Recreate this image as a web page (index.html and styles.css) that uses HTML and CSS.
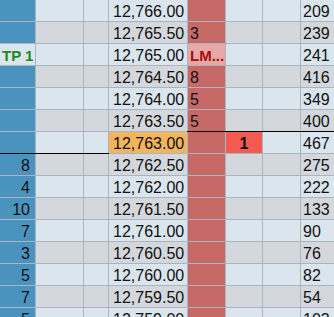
FILE: index.html
```html
<!DOCTYPE html>
<html>
<head>
<meta charset="utf-8">
<link rel="stylesheet" href="styles.css">
</head>
<body>
<div class="dom">
  <div class="c bid"></div><div class="c"></div><div class="c"></div><div class="c price">12,766.00</div><div class="c ask"></div><div class="c"></div><div class="c"></div><div class="c vol">209</div>
  <div class="c bid"></div><div class="c alt"></div><div class="c alt"></div><div class="c price alt">12,765.50</div><div class="c ask">3</div><div class="c alt"></div><div class="c alt"></div><div class="c vol alt">239</div>
  <div class="c tp">TP 1</div><div class="c"></div><div class="c"></div><div class="c price">12,765.00</div><div class="c ask order">LM...</div><div class="c"></div><div class="c"></div><div class="c vol">241</div>
  <div class="c bid"></div><div class="c alt"></div><div class="c alt"></div><div class="c price alt">12,764.50</div><div class="c ask">8</div><div class="c alt"></div><div class="c alt"></div><div class="c vol alt">416</div>
  <div class="c bid"></div><div class="c"></div><div class="c"></div><div class="c price">12,764.00</div><div class="c ask">5</div><div class="c"></div><div class="c"></div><div class="c vol">349</div>
  <div class="c bid"></div><div class="c alt"></div><div class="c alt"></div><div class="c price alt">12,763.50</div><div class="c ask">5</div><div class="c alt"></div><div class="c alt"></div><div class="c vol alt">400</div>
  <div class="c bid below"></div><div class="c below"></div><div class="c below"></div><div class="c price last">12,763.00</div><div class="c ask above"></div><div class="c trade above">1</div><div class="c above"></div><div class="c vol above">467</div>
  <div class="c bid">8</div><div class="c alt"></div><div class="c alt"></div><div class="c price alt">12,762.50</div><div class="c ask"></div><div class="c alt"></div><div class="c alt"></div><div class="c vol alt">275</div>
  <div class="c bid">4</div><div class="c"></div><div class="c"></div><div class="c price">12,762.00</div><div class="c ask"></div><div class="c"></div><div class="c"></div><div class="c vol">222</div>
  <div class="c bid">10</div><div class="c alt"></div><div class="c alt"></div><div class="c price alt">12,761.50</div><div class="c ask"></div><div class="c alt"></div><div class="c alt"></div><div class="c vol alt">133</div>
  <div class="c bid">7</div><div class="c"></div><div class="c"></div><div class="c price">12,761.00</div><div class="c ask"></div><div class="c"></div><div class="c"></div><div class="c vol">90</div>
  <div class="c bid">3</div><div class="c alt"></div><div class="c alt"></div><div class="c price alt">12,760.50</div><div class="c ask"></div><div class="c alt"></div><div class="c alt"></div><div class="c vol alt">76</div>
  <div class="c bid">5</div><div class="c"></div><div class="c"></div><div class="c price">12,760.00</div><div class="c ask"></div><div class="c"></div><div class="c"></div><div class="c vol">82</div>
  <div class="c bid">7</div><div class="c alt"></div><div class="c alt"></div><div class="c price alt">12,759.50</div><div class="c ask"></div><div class="c alt"></div><div class="c alt"></div><div class="c vol alt">54</div>
  <div class="c bid">5</div><div class="c"></div><div class="c"></div><div class="c price">12,759.00</div><div class="c ask"></div><div class="c"></div><div class="c"></div><div class="c vol">103</div>
</div>
</body>
</html>
```
FILE: styles.css
```css
html, body {
  margin: 0;
  padding: 0;
  overflow: hidden;
  background: #dae5ed;
}
.dom {
  display: grid;
  grid-template-columns: 35px 47px 24px 78px 37px 36px 37px 1fr;
  grid-auto-rows: 21px;
  gap: 1px;
  background: #a8b6c2;
  width: 334px;
  font-family: "Liberation Sans", Arial, sans-serif;
  font-size: 16px;
  color: #111;
}
.c {
  position: relative;
  background: #dae5ed;
  line-height: 23px;
  white-space: nowrap;
  overflow: visible;
}
.c.alt { background: #d4d8dc; }
.bid {
  background: #4b93bf;
  text-align: right;
  padding-right: 5px;
}
.tp {
  background: #dae5ed;
  color: #1e8a1e;
  font-weight: bold;
  font-size: 15px;
  padding-left: 2px;
}
.price { padding-left: 4px; }
.price.last { background: #f2b55d; }
.ask {
  background: #c76a67;
  padding-left: 2px;
}
.ask.order {
  background: #e6a9a7;
  color: #a80c0c;
  font-weight: bold;
  font-size: 15px;
}
.trade {
  background: #f25b4f;
  font-weight: bold;
  text-align: center;
}
.vol { padding-left: 2px; }
.below::after {
  content: "";
  position: absolute;
  left: -1px;
  right: -1px;
  bottom: -1px;
  height: 1px;
  background: #000;
}
.above::before {
  content: "";
  position: absolute;
  left: -1px;
  right: -1px;
  top: -1px;
  height: 1px;
  background: #000;
}
```
